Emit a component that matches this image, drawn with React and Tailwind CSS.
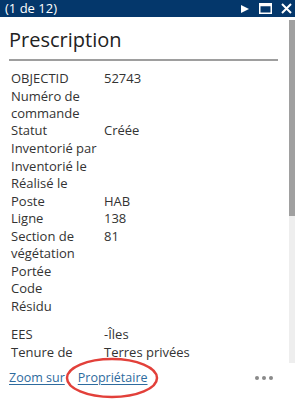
import React from "react";

const rows = [
  ["OBJECTID", "52743"],
  ["Numéro de commande", ""],
  ["Statut", "Créée"],
  ["Inventorié par", ""],
  ["Inventorié le", ""],
  ["Réalisé le", ""],
  ["Poste", "HAB"],
  ["Ligne", "138"],
  ["Section de végétation", "81"],
  ["Portée", ""],
  ["Code", ""],
  ["Résidu", ""],
];

const rows2 = [
  ["EES", "-Îles"],
  ["Tenure de terre", "Terres privées"],
];

function Row({ label, value }) {
  return (
    <div className="flex py-[0.3px]">
      <div className="w-[93px] shrink-0 pr-1">{label}</div>
      <div className="flex-1">{value}</div>
    </div>
  );
}

export default function App() {
  return (
    <div
      className="w-[295px] h-[399px] bg-white relative overflow-hidden text-[#333333]"
      style={{ fontFamily: "'Open Sans', Lato, sans-serif" }}
    >
      <div className="h-[17px] bg-[#04376b] flex items-center justify-between pl-[5px] pr-[3px]">
        <span className="text-white text-[13px] leading-none">(1 de 12)</span>
        <div className="flex items-center gap-[9px] text-white">
          <svg width="10" height="10" viewBox="0 0 10 10">
            <polygon points="1,1 9,5 1,9" fill="white" />
          </svg>
          <svg width="13" height="11" viewBox="0 0 13 11">
            <rect x="0.75" y="0.75" width="11.5" height="9.5" fill="none" stroke="white" strokeWidth="1.5" />
            <rect x="0.75" y="0.75" width="11.5" height="2.5" fill="white" />
          </svg>
          <svg width="11" height="11" viewBox="0 0 11 11">
            <path d="M1 1 L10 10 M10 1 L1 10" stroke="white" strokeWidth="2" />
          </svg>
        </div>
      </div>
      <div className="flex h-[346px]">
        <div className="flex-1 overflow-hidden pl-[9px] pr-[11px]">
          <div className="text-[20px] leading-none pt-[13px] pb-[9px] text-[#222]">Prescription</div>
          <div className="h-[2px] bg-[#9e9e9e]" />
          <div className="pl-[2px] pt-[9px] text-[13px] leading-[17px]">
            {rows.map(([l, v]) => (
              <Row key={l} label={l} value={v} />
            ))}
            <div className="h-[11px]" />
            {rows2.map(([l, v]) => (
              <Row key={l} label={l} value={v} />
            ))}
          </div>
        </div>
        <div className="w-[6px] mt-[3px] bg-[#eeeeee] flex flex-col">
          <div className="h-[196px] bg-[#a0a0a0]" />
        </div>
      </div>
      <div className="flex items-center justify-between pl-[9px] pr-[22px] h-[30px] text-[12.5px]">
        <div className="flex gap-[13px] text-[#2e6b9e]">
          <span className="underline underline-offset-2">Zoom sur</span>
          <span className="underline underline-offset-2">Propriétaire</span>
        </div>
        <div className="flex gap-[3px]">
          <span className="w-[4px] h-[4px] rounded-full bg-[#8a8a8a]" />
          <span className="w-[4px] h-[4px] rounded-full bg-[#8a8a8a]" />
          <span className="w-[4px] h-[4px] rounded-full bg-[#8a8a8a]" />
        </div>
      </div>
      <svg className="absolute left-0 top-0 pointer-events-none" width="295" height="399">
        <ellipse cx="112" cy="378" rx="45" ry="19" fill="none" stroke="#e2403a" strokeWidth="2.5" />
      </svg>
    </div>
  );
}
